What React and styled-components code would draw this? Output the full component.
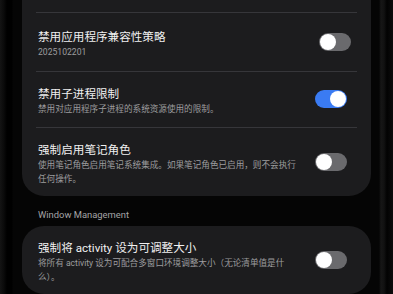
import React from 'react';
import styled, { createGlobalStyle } from 'styled-components';

const GlobalStyle = createGlobalStyle`
  html, body {
    margin: 0;
    padding: 0;
    background: linear-gradient(
      to right,
      #141414 0px,
      #0a0a0a 4px,
      #000 7px,
      #000 12px,
      #050505 13px,
      #050505 379px,
      #161616 381px,
      #111 384px,
      #020202 387px,
      #0c0c0c 393px
    );
    font-family: Roboto, 'Noto Sans CJK SC', sans-serif;
    -webkit-font-smoothing: antialiased;
  }
`;

export default function App() {
  return (
    <>
      <GlobalStyle />
      <Screen>
        <Card $cutTop>
          <TopStub />
          {FIRST_GROUP.map((item) => (
            <Row key={item.title} $height={item.height}>
              <TextBlock>
                <Title>{item.title}</Title>
                <Summary>{item.summary}</Summary>
              </TextBlock>
              <Switch $on={item.on} $shift={item.shift} />
            </Row>
          ))}
        </Card>
        <SectionHeader>Window Management</SectionHeader>
        <Card>
          <Row $height={68} $first>
            <TextBlock>
              <Title>强制将 activity 设为可调整大小</Title>
              <Summary>
                将所有 activity 设为可配合多窗口环境调整大小（无论清单值是什么）。
              </Summary>
            </TextBlock>
            <Switch $on={false} $shift={4} />
          </Row>
        </Card>
      </Screen>
    </>
  );
}

const FIRST_GROUP = [
  {
    title: '禁用应用程序兼容性策略',
    summary: '2025102201',
    on: false,
    height: 59,
    shift: 0,
  },
  {
    title: '禁用子进程限制',
    summary: '禁用对应用程序子进程的系统资源使用的限制。',
    on: true,
    height: 56,
    shift: 4,
  },
  {
    title: '强制启用笔记角色',
    summary: '使用笔记角色启用笔记系统集成。如果笔记角色已启用，则不会执行任何操作。',
    on: false,
    height: 69,
    shift: 4,
  },
];

const Screen = styled.div`
  margin: 0 22px;
  height: 294px;
  overflow: hidden;
  display: flex;
  flex-direction: column;
`;

const Card = styled.div`
  background: #1c1c1e;
  border-radius: ${(p) => (p.$cutTop ? '0 0 22px 22px' : '22px')};
  display: flex;
  flex-direction: column;
  flex-shrink: 0;
`;

const TopStub = styled.div`
  height: 12px;
`;

const Row = styled.div`
  height: ${(p) => p.$height}px;
  display: flex;
  align-items: center;
  justify-content: space-between;
  padding: 0 20px 0 16px;
  box-sizing: border-box;
  position: relative;

  &::before {
    content: '';
    display: ${(p) => (p.$first ? 'none' : 'block')};
    position: absolute;
    top: 0;
    left: 14px;
    right: 14px;
    height: 1px;
    background: #36363a;
  }
`;

const TextBlock = styled.div`
  display: flex;
  flex-direction: column;
  width: 264px;
  padding-top: 4px;
`;

const Title = styled.div`
  color: #f0f0f0;
  font-size: 11.6px;
  line-height: 16px;
`;

const Summary = styled.div`
  color: #9c9c9e;
  font-size: 8.6px;
  line-height: 14px;
`;

const SwitchTrack = styled.div`
  width: 32px;
  height: 18px;
  border-radius: 9px;
  background: ${(p) => (p.$on ? '#3a7bf3' : '#6a6a6d')};
  display: flex;
  align-items: center;
  justify-content: ${(p) => (p.$on ? 'flex-end' : 'flex-start')};
  padding: 0 1px;
  box-sizing: border-box;
  flex-shrink: 0;
  margin-right: ${(p) => p.$shift}px;
`;

const Knob = styled.div`
  width: 16px;
  height: 16px;
  border-radius: 50%;
  background: #ffffff;
`;

function Switch({ $on, $shift }) {
  return (
    <SwitchTrack $on={$on} $shift={$shift}>
      <Knob />
    </SwitchTrack>
  );
}

const SectionHeader = styled.div`
  color: #a4a4a6;
  font-size: 9.4px;
  line-height: 14px;
  padding: 12px 16px 4px;
`;
